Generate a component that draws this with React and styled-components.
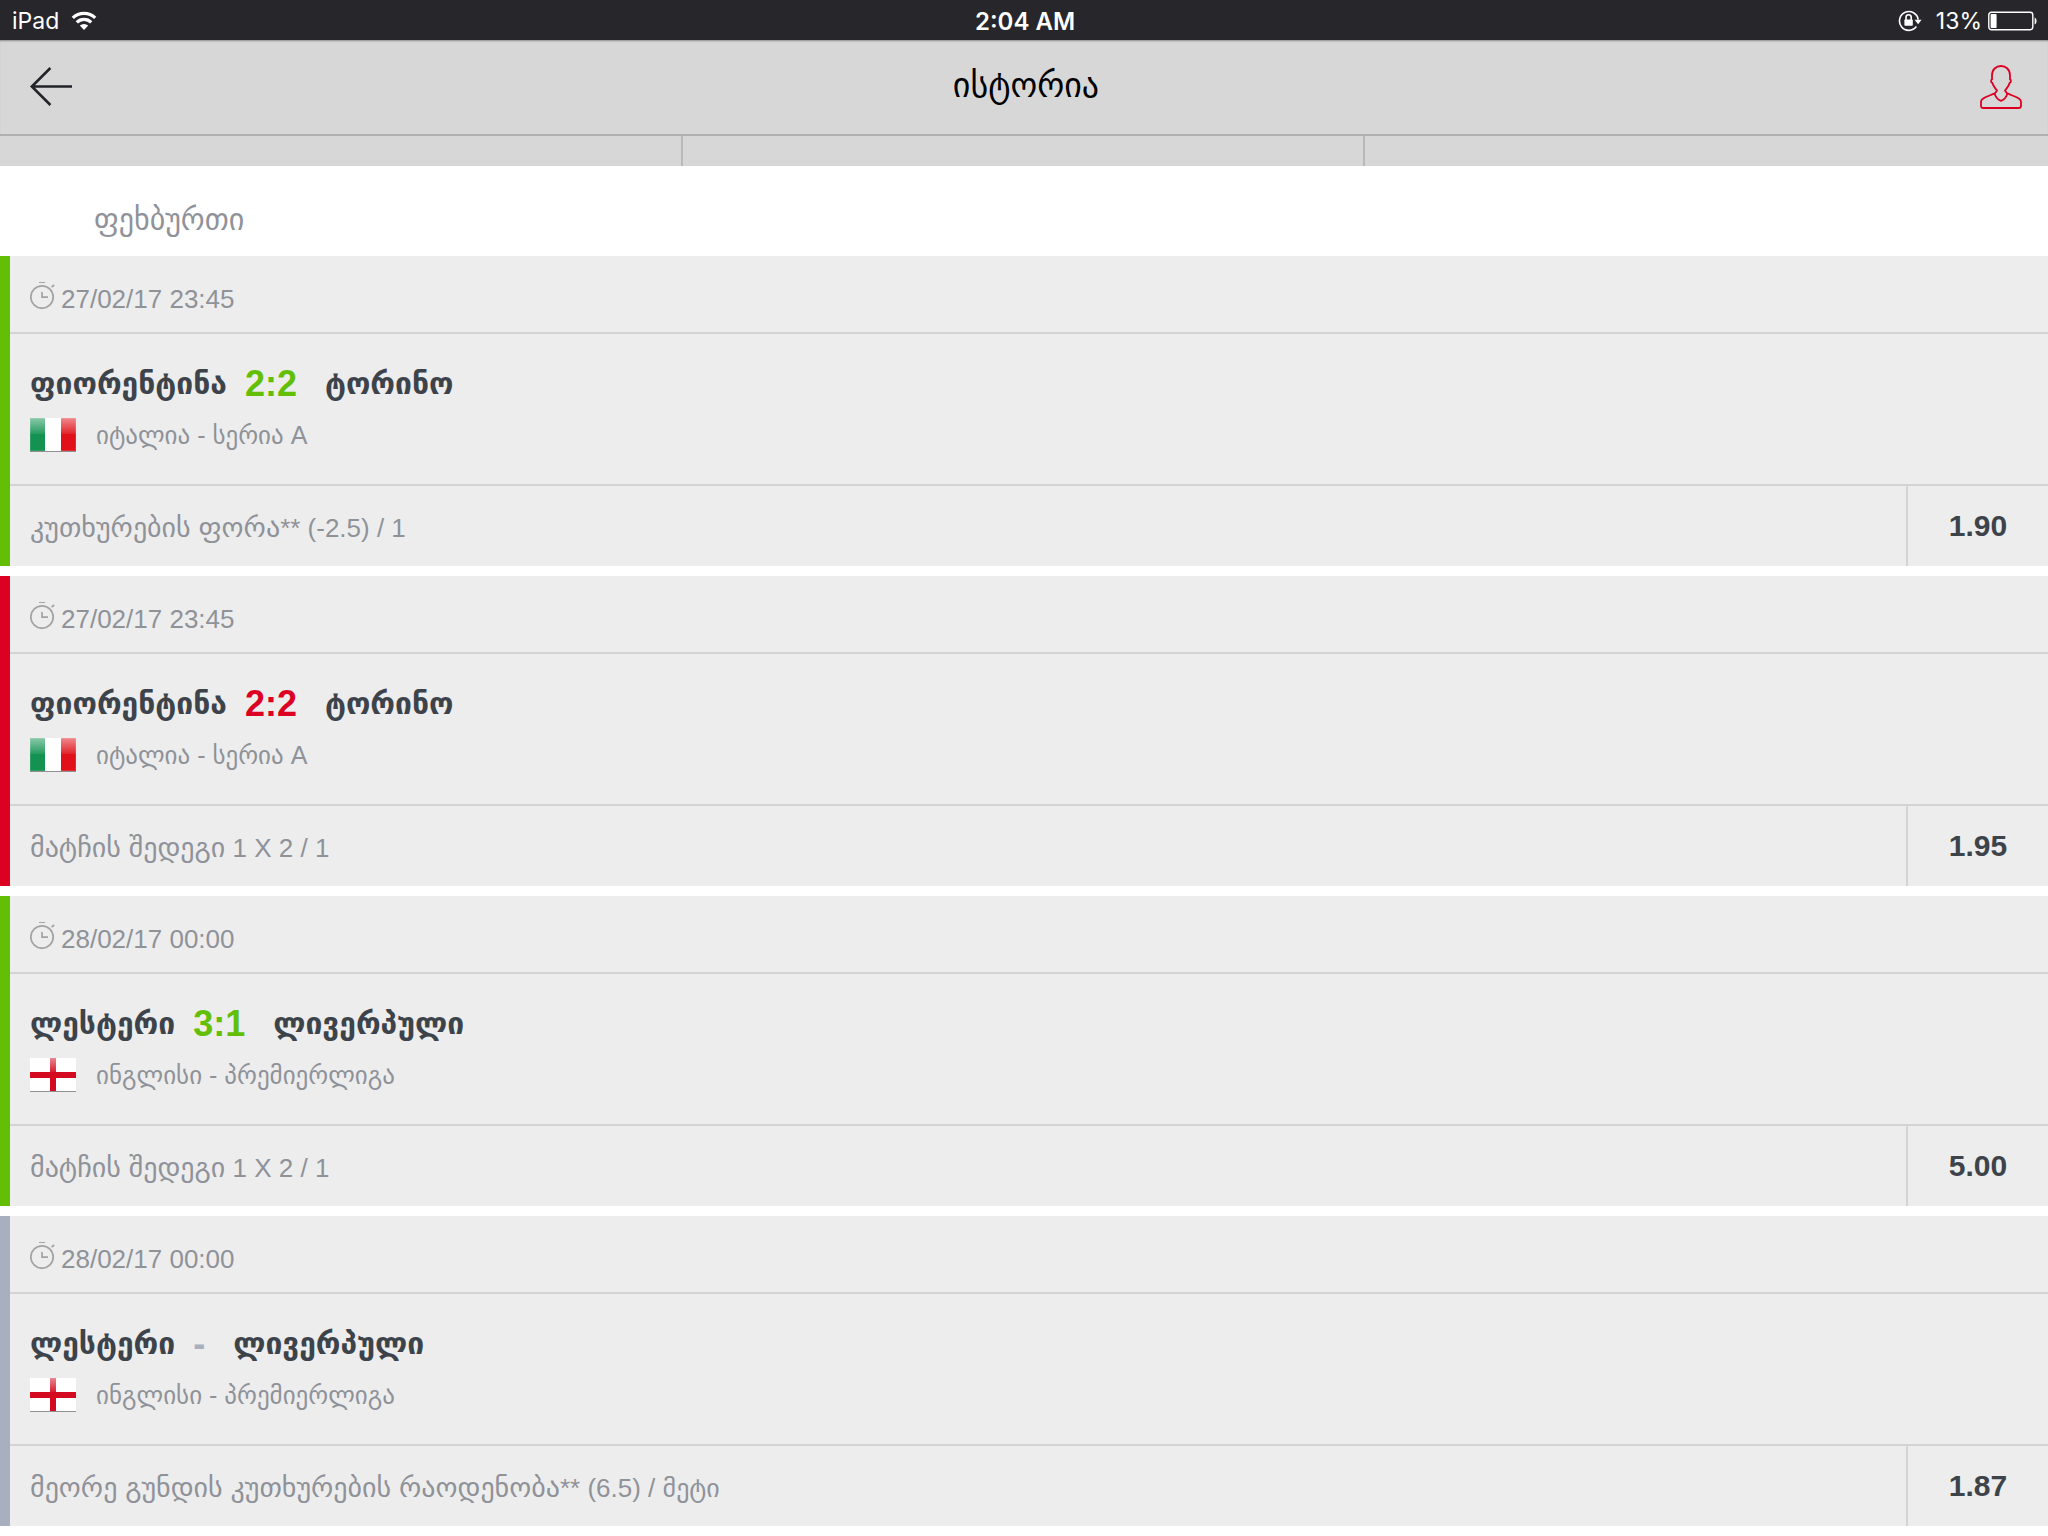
import React from "react";
import styled, { createGlobalStyle } from "styled-components";

const GlobalStyle = createGlobalStyle`
  *, *::before, *::after { box-sizing: border-box; }
  body {
    margin: 0;
    background: #fff;
    color: #8f9299;
    font-family: "Liberation Sans", "DejaVu Sans", sans-serif;
    font-size: 26px;
  }
  h1, h2, p, ul { margin: 0; padding: 0; }
`;

const tones = { won: "#63bf06", lost: "#dc0023", open: "#a8afbe" };

const StatusBar = styled.div`
  display: grid;
  grid-template-columns: 1fr auto 1fr;
  align-items: center;
  height: 40px;
  padding: 2px 10px 0 12px;
  background: #26262b;
  color: #fff;
  font-family: Inter, sans-serif;
  font-size: 23px;
`;

const StatusGroup = styled.div`
  display: flex;
  align-items: center;
  justify-content: ${(p) => (p.$end ? "flex-end" : "flex-start")};
  gap: ${(p) => (p.$end ? "6px" : "12px")};
`;

const Clock = styled.time`
  font-size: 24px;
  font-weight: 600;
`;

const LockIcon = styled.svg`
  margin-right: 8px;
`;

const Header = styled.header`
  display: grid;
  grid-template-columns: 42px 1fr 42px;
  align-items: center;
  height: 96px;
  padding: 0 26px 0 30px;
  background: #d7d7d7;
  border-bottom: 2px solid #b0b0b0;
  box-shadow: inset 0 2px 2px -1px #8c8c8c;
`;

const Title = styled.h1`
  padding-bottom: 4px;
  color: #000;
  font-size: 34px;
  font-weight: 400;
  text-align: center;
`;

const IconButton = styled.button`
  display: flex;
  align-items: center;
  justify-content: center;
  width: 42px;
  height: 72px;
  padding: 0;
  border: 0;
  background: none;
`;

const Strip = styled.div`
  display: grid;
  grid-template-columns: repeat(3, 1fr);
  height: 30px;
  background: #d7d7d7;
`;

const StripCell = styled.div`
  &:not(:last-child) { border-right: 2px solid #b9b9b9; }
`;

const Sport = styled.h2`
  display: flex;
  align-items: center;
  height: 90px;
  padding: 16px 94px 0;
  font-size: 30px;
  font-weight: 400;
`;

const BetList = styled.ul`
  display: flex;
  flex-direction: column;
  gap: 10px;
  padding-bottom: 10px;
  list-style: none;
`;

const Bet = styled.li`
  display: flex;
  flex-direction: column;
  background: #ededed;
  border-left: 10px solid ${(p) => tones[p.$tone]};
`;

const DateRow = styled.div`
  display: flex;
  align-items: center;
  gap: 4px;
  height: 78px;
  padding: 10px 20px 0;
  border-bottom: 2px solid #d4d4d4;
`;

const StopwatchIcon = styled.svg`
  margin-bottom: 8px;
`;

const Match = styled.div`
  display: flex;
  flex-direction: column;
  height: 152px;
  padding: 30px 20px 0;
  gap: 11px;
  border-bottom: 2px solid #d4d4d4;
`;

const Teams = styled.div`
  display: flex;
  align-items: center;
  height: 40px;
  line-height: 40px;
  color: #3d434a;
  font-weight: 700;
`;

const Team = styled.span`
  font-size: 30px;
`;

const Score = styled.span`
  margin: 0 28px 0 18px;
  color: ${(p) => tones[p.$tone]};
  font-size: 36px;
`;

const League = styled.div`
  display: flex;
  align-items: center;
  gap: 20px;
  height: 40px;
  font-size: 25px;
`;

const Market = styled.div`
  display: flex;
  height: 80px;
`;

const Pick = styled.p`
  flex: 1;
  padding: 4px 20px 0;
  line-height: 76px;
`;

const PickName = styled.span`
  font-size: 28px;
`;

const Odds = styled.strong`
  width: 142px;
  border-left: 2px solid #d4d4d4;
  color: #3d434a;
  font-size: 30px;
  line-height: 80px;
  text-align: center;
`;

const bets = [
  { date: "27/02/17 23:45", home: "ფიორენტინა", away: "ტორინო", score: "2:2", tone: "won", flag: "it", league: "იტალია - სერია A", pick: "კუთხურების ფორა", line: "** (-2.5) / 1", odds: "1.90" },
  { date: "27/02/17 23:45", home: "ფიორენტინა", away: "ტორინო", score: "2:2", tone: "lost", flag: "it", league: "იტალია - სერია A", pick: "მატჩის შედეგი", line: " 1 X 2 / 1", odds: "1.95" },
  { date: "28/02/17 00:00", home: "ლესტერი", away: "ლივერპული", score: "3:1", tone: "won", flag: "en", league: "ინგლისი - პრემიერლიგა", pick: "მატჩის შედეგი", line: " 1 X 2 / 1", odds: "5.00" },
  { date: "28/02/17 00:00", home: "ლესტერი", away: "ლივერპული", score: "-", tone: "open", flag: "en", league: "ინგლისი - პრემიერლიგა", pick: "მეორე გუნდის კუთხურების რაოდენობა", line: "** (6.5) / მეტი", odds: "1.87" },
];

function Wifi() {
  return (
    <svg width="26" height="20" viewBox="0 0 26 20" fill="none" stroke="#fff" strokeWidth="3.2" aria-hidden="true">
      <path d="M1.8 6.9a16 16 0 0 1 22.4 0" />
      <path d="M5.8 11.3a10.2 10.2 0 0 1 14.4 0" />
      <path d="M13 19l-4.2-4.4a6 6 0 0 1 8.4 0z" fill="#fff" stroke="none" />
    </svg>
  );
}

function RotationLock() {
  return (
    <LockIcon width="24" height="22" viewBox="0 0 24 22" fill="none" stroke="#fff" strokeWidth="1.6" aria-hidden="true">
      <path d="M20.2 9.6A9.4 9.4 0 1 0 18.4 16.6" />
      <path d="M16.6 9.8h7l-3.5 4.4z" fill="#fff" stroke="none" />
      <rect x="6.4" y="9.4" width="8.4" height="6.4" rx="0.8" fill="#fff" stroke="none" />
      <path d="M8 10V7.4a2.6 2.6 0 0 1 5.2 0V10" />
    </LockIcon>
  );
}

function Battery() {
  return (
    <svg width="50" height="20" viewBox="0 0 50 20" aria-hidden="true">
      <rect x="0.8" y="1.3" width="44" height="17.4" rx="2.6" fill="none" stroke="#fff" strokeWidth="1.4" />
      <rect x="2.6" y="3" width="6" height="14" rx="0.8" fill="#fff" />
      <path d="M46.6 6.6c2.6 0.4 2.6 6.4 0 6.8z" fill="#fff" />
    </svg>
  );
}

function BackArrow() {
  return (
    <svg width="42" height="40" viewBox="0 0 42 40" fill="none" stroke="#23242a" strokeWidth="2.6" aria-hidden="true">
      <path d="M20.4 1L1.8 19.5L20.4 38M2 19.5H42" />
    </svg>
  );
}

function Person() {
  return (
    <svg width="42" height="44" viewBox="0 0 42 44" fill="none" stroke="#dc0023" strokeWidth="1.8" strokeLinejoin="round" aria-hidden="true">
      <path d="M12 14.4V10.5C12 4.5 16 1 21 1s9 3.5 9 9.5v3.9c1.3 0.6 1.3 3.2-0.4 3.6-0.8 3.4-2.8 5.2-4.6 7.6l1.8 2.4c4 2.2 8 3 12 5.4 1.6 1 2.2 1.9 2.2 3.400v4c0 1.500-0.700 2.200-2.200 2.200H3.200c-1.500 0-2.200-0.700-2.200-2.200v-4c0-1.500 0.600-2.400 2.200-3.400 4-2.400 8-3.200 12-5.400l1.800-2.400c-1.800-2.400-3.800-4.200-4.600-7.600-1.700-0.400-1.700-3-0.400-3.600z" />
      <path d="M14.600 28c0.400 3.800 3.400 7 6.400 7.800 3-0.800 6-4 6.400-7.800" />
    </svg>
  );
}

function Stopwatch() {
  return (
    <StopwatchIcon width="27" height="28" viewBox="0 0 27 28" fill="none" stroke="#a3a3a3" aria-hidden="true">
      <circle cx="12" cy="16" r="11.2" strokeWidth="1.7" />
      <path d="M9 1.5h6" strokeWidth="1" />
      <path d="M21.6 6.2l2.6-2.4" strokeWidth="1.8" />
      <path d="M12 11v5.2h6" strokeWidth="1.7" />
    </StopwatchIcon>
  );
}

function Flag({ country }) {
  const id = React.useId();
  return (
    <svg width="46" height="34" viewBox="0 0 46 34" role="img" aria-label={country === "it" ? "იტალია" : "ინგლისი"}>
      <defs>
        <linearGradient id={id} x1="0" y1="0" x2="0" y2="1">
          <stop offset="0" stopColor="#fff" stopOpacity="0.5" />
          <stop offset="1" stopColor="#fff" stopOpacity="0.08" />
        </linearGradient>
      </defs>
      <rect width="46" height="33" fill="#fff" />
      {country === "it" ? (
        <>
          <rect width="15" height="33" fill="#149252" />
          <rect x="31" width="15" height="33" fill="#e01119" />
          <rect x="0.5" y="0.5" width="45" height="32" fill="none" stroke="#fff" strokeOpacity="0.12" />
          <rect width="46" height="16" fill={`url(#${id})`} />
        </>
      ) : (
        <>
          <rect x="20" width="6" height="33" fill="#d40a20" />
          <rect x="20" width="6" height="14" fill={`url(#${id})`} />
          <rect y="14" width="46" height="6" fill="#d40a20" />
        </>
      )}
      <rect y="33" width="46" height="1" fill="#909090" />
    </svg>
  );
}

export default function App() {
  return (
    <>
      <GlobalStyle />
      <StatusBar>
        <StatusGroup>
          <span>iPad</span>
          <Wifi />
        </StatusGroup>
        <Clock>2:04 AM</Clock>
        <StatusGroup $end>
          <RotationLock />
          <span>13%</span>
          <Battery />
        </StatusGroup>
      </StatusBar>
      <Header>
        <IconButton type="button" aria-label="უკან"><BackArrow /></IconButton>
        <Title>ისტორია</Title>
        <IconButton type="button" aria-label="პროფილი"><Person /></IconButton>
      </Header>
      <Strip>
        <StripCell />
        <StripCell />
        <StripCell />
      </Strip>
      <main>
        <Sport>ფეხბურთი</Sport>
        <BetList>
          {bets.map((bet, i) => (
            <Bet key={i} $tone={bet.tone}>
              <DateRow>
                <Stopwatch />
                <time>{bet.date}</time>
              </DateRow>
              <Match>
                <Teams>
                  <Team>{bet.home}</Team>
                  <Score $tone={bet.tone}>{bet.score}</Score>
                  <Team>{bet.away}</Team>
                </Teams>
                <League>
                  <Flag country={bet.flag} />
                  <span>{bet.league}</span>
                </League>
              </Match>
              <Market>
                <Pick><PickName>{bet.pick}</PickName>{bet.line}</Pick>
                <Odds>{bet.odds}</Odds>
              </Market>
            </Bet>
          ))}
        </BetList>
      </main>
    </>
  );
}
